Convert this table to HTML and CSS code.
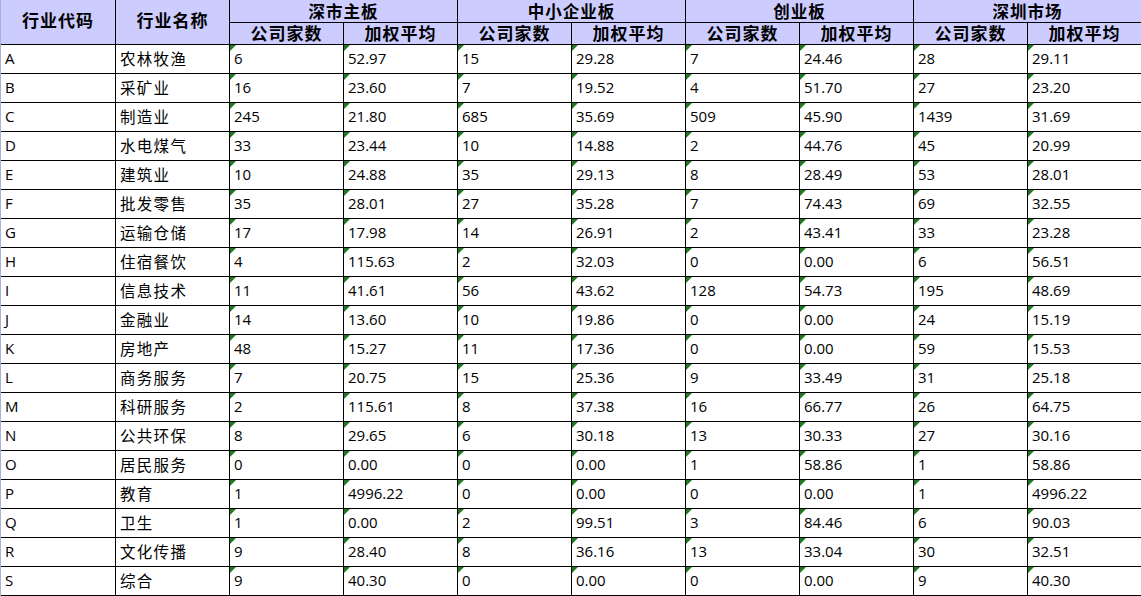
FILE: index.html
```html
<!DOCTYPE html>
<html lang="zh-CN">
<head>
<meta charset="utf-8">
<title>行业市盈率</title>
<link rel="stylesheet" href="styles.css">
</head>
<body>
<div class="sheet">
  <div class="c h span-r">行业代码</div>
  <div class="c h span-r">行业名称</div>
  <div class="c h span-c">深市主板</div>
  <div class="c h span-c">中小企业板</div>
  <div class="c h span-c">创业板</div>
  <div class="c h span-c">深圳市场</div>
  <div class="c h sub">公司家数</div><div class="c h sub">加权平均</div>
  <div class="c h sub">公司家数</div><div class="c h sub">加权平均</div>
  <div class="c h sub">公司家数</div><div class="c h sub">加权平均</div>
  <div class="c h sub">公司家数</div><div class="c h sub">加权平均</div>

  <div class="c d">A</div><div class="c d cn">农林牧渔</div><div class="c d n">6</div><div class="c d n">52.97</div><div class="c d n">15</div><div class="c d n">29.28</div><div class="c d n">7</div><div class="c d n">24.46</div><div class="c d n">28</div><div class="c d n">29.11</div>
  <div class="c d">B</div><div class="c d cn">采矿业</div><div class="c d n">16</div><div class="c d n">23.60</div><div class="c d n">7</div><div class="c d n">19.52</div><div class="c d n">4</div><div class="c d n">51.70</div><div class="c d n">27</div><div class="c d n">23.20</div>
  <div class="c d">C</div><div class="c d cn">制造业</div><div class="c d n">245</div><div class="c d n">21.80</div><div class="c d n">685</div><div class="c d n">35.69</div><div class="c d n">509</div><div class="c d n">45.90</div><div class="c d n">1439</div><div class="c d n">31.69</div>
  <div class="c d">D</div><div class="c d cn">水电煤气</div><div class="c d n">33</div><div class="c d n">23.44</div><div class="c d n">10</div><div class="c d n">14.88</div><div class="c d n">2</div><div class="c d n">44.76</div><div class="c d n">45</div><div class="c d n">20.99</div>
  <div class="c d">E</div><div class="c d cn">建筑业</div><div class="c d n">10</div><div class="c d n">24.88</div><div class="c d n">35</div><div class="c d n">29.13</div><div class="c d n">8</div><div class="c d n">28.49</div><div class="c d n">53</div><div class="c d n">28.01</div>
  <div class="c d">F</div><div class="c d cn">批发零售</div><div class="c d n">35</div><div class="c d n">28.01</div><div class="c d n">27</div><div class="c d n">35.28</div><div class="c d n">7</div><div class="c d n">74.43</div><div class="c d n">69</div><div class="c d n">32.55</div>
  <div class="c d">G</div><div class="c d cn">运输仓储</div><div class="c d n">17</div><div class="c d n">17.98</div><div class="c d n">14</div><div class="c d n">26.91</div><div class="c d n">2</div><div class="c d n">43.41</div><div class="c d n">33</div><div class="c d n">23.28</div>
  <div class="c d">H</div><div class="c d cn">住宿餐饮</div><div class="c d n">4</div><div class="c d n">115.63</div><div class="c d n">2</div><div class="c d n">32.03</div><div class="c d n">0</div><div class="c d n">0.00</div><div class="c d n">6</div><div class="c d n">56.51</div>
  <div class="c d">I</div><div class="c d cn">信息技术</div><div class="c d n">11</div><div class="c d n">41.61</div><div class="c d n">56</div><div class="c d n">43.62</div><div class="c d n">128</div><div class="c d n">54.73</div><div class="c d n">195</div><div class="c d n">48.69</div>
  <div class="c d">J</div><div class="c d cn">金融业</div><div class="c d n">14</div><div class="c d n">13.60</div><div class="c d n">10</div><div class="c d n">19.86</div><div class="c d n">0</div><div class="c d n">0.00</div><div class="c d n">24</div><div class="c d n">15.19</div>
  <div class="c d">K</div><div class="c d cn">房地产</div><div class="c d n">48</div><div class="c d n">15.27</div><div class="c d n">11</div><div class="c d n">17.36</div><div class="c d n">0</div><div class="c d n">0.00</div><div class="c d n">59</div><div class="c d n">15.53</div>
  <div class="c d">L</div><div class="c d cn">商务服务</div><div class="c d n">7</div><div class="c d n">20.75</div><div class="c d n">15</div><div class="c d n">25.36</div><div class="c d n">9</div><div class="c d n">33.49</div><div class="c d n">31</div><div class="c d n">25.18</div>
  <div class="c d">M</div><div class="c d cn">科研服务</div><div class="c d n">2</div><div class="c d n">115.61</div><div class="c d n">8</div><div class="c d n">37.38</div><div class="c d n">16</div><div class="c d n">66.77</div><div class="c d n">26</div><div class="c d n">64.75</div>
  <div class="c d">N</div><div class="c d cn">公共环保</div><div class="c d n">8</div><div class="c d n">29.65</div><div class="c d n">6</div><div class="c d n">30.18</div><div class="c d n">13</div><div class="c d n">30.33</div><div class="c d n">27</div><div class="c d n">30.16</div>
  <div class="c d">O</div><div class="c d cn">居民服务</div><div class="c d n">0</div><div class="c d n">0.00</div><div class="c d n">0</div><div class="c d n">0.00</div><div class="c d n">1</div><div class="c d n">58.86</div><div class="c d n">1</div><div class="c d n">58.86</div>
  <div class="c d">P</div><div class="c d cn">教育</div><div class="c d n">1</div><div class="c d n">4996.22</div><div class="c d n">0</div><div class="c d n">0.00</div><div class="c d n">0</div><div class="c d n">0.00</div><div class="c d n">1</div><div class="c d n">4996.22</div>
  <div class="c d">Q</div><div class="c d cn">卫生</div><div class="c d n">1</div><div class="c d n">0.00</div><div class="c d n">2</div><div class="c d n">99.51</div><div class="c d n">3</div><div class="c d n">84.46</div><div class="c d n">6</div><div class="c d n">90.03</div>
  <div class="c d">R</div><div class="c d cn">文化传播</div><div class="c d n">9</div><div class="c d n">28.40</div><div class="c d n">8</div><div class="c d n">36.16</div><div class="c d n">13</div><div class="c d n">33.04</div><div class="c d n">30</div><div class="c d n">32.51</div>
  <div class="c d">S</div><div class="c d cn">综合</div><div class="c d n">9</div><div class="c d n">40.30</div><div class="c d n">0</div><div class="c d n">0.00</div><div class="c d n">0</div><div class="c d n">0.00</div><div class="c d n">9</div><div class="c d n">40.30</div>
</div>
</body>
</html>
```

FILE: styles.css
```css
html, body {
  margin: 0;
  padding: 0;
  background: #ffffff;
}

.sheet {
  display: grid;
  grid-template-columns: 115px repeat(9, 114px);
  grid-template-rows: 23px 22px repeat(19, 29px);
  width: 1142px;
  border-left: 1px solid #a3b5d3;
  font-family: "Open Sans", "Noto Sans CJK SC", sans-serif;
  color: #000000;
}

.c {
  box-sizing: border-box;
  border-right: 1px solid #000000;
  border-bottom: 1px solid #000000;
  display: flex;
  align-items: center;
  white-space: nowrap;
  position: relative;
}

.h {
  background: #ccccff;
  justify-content: center;
  font-family: "Noto Sans CJK SC", sans-serif;
  font-weight: 700;
  font-size: 17px;
  letter-spacing: 1px;
  line-height: 17px;
  padding-bottom: 3px;
}

.span-r {
  grid-row: span 2;
  padding-bottom: 5px;
}

.span-c {
  grid-column: span 2;
  font-size: 16.5px;
  padding-top: 1px;
  padding-bottom: 1px;
}

.d {
  padding-left: 4px;
  padding-bottom: 1px;
  font-size: 15px;
  line-height: 1;
  overflow: hidden;
}

.cn {
  font-family: "Noto Sans CJK SC", sans-serif;
  font-size: 15.5px;
  letter-spacing: 1.3px;
}

.n::before {
  content: "";
  position: absolute;
  left: 0;
  top: 0;
  width: 0;
  height: 0;
  border-top: 6px solid #1f7a1f;
  border-right: 6px solid transparent;
}
```
